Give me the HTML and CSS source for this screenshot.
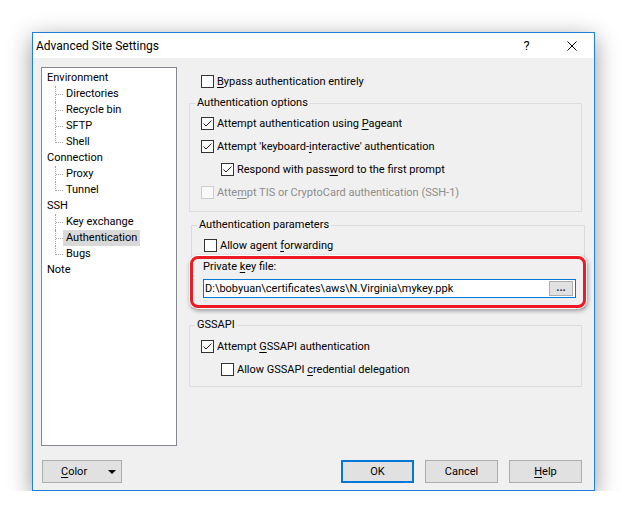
FILE: index.html
```html
<!DOCTYPE html>
<html lang="en">
<head>
    <meta charset="UTF-8">
    <meta name="viewport" content="width=device-width, initial-scale=1.0">
    <title>Advanced Site Settings</title>
    <link rel="stylesheet" href="styles.css">
</head>
<body>
    <div class="window">
        <div class="titlebar">
            <span class="title">Advanced Site Settings</span>
            <span class="tb-btn">?</span>
            <span class="tb-btn">
                <svg width="10" height="10" viewBox="0 0 10 10"><path d="M0.5 0.5 L9.5 9.5 M9.5 0.5 L0.5 9.5" stroke="#000" stroke-width="1" fill="none"/></svg>
            </span>
        </div>

        <div class="content">
            <div class="main">
                <ul class="tree">
                    <li><span class="node">Environment</span>
                        <ul>
                            <li><span class="node">Directories</span></li>
                            <li><span class="node">Recycle bin</span></li>
                            <li><span class="node">SFTP</span></li>
                            <li><span class="node">Shell</span></li>
                        </ul>
                    </li>
                    <li><span class="node">Connection</span>
                        <ul>
                            <li><span class="node">Proxy</span></li>
                            <li><span class="node">Tunnel</span></li>
                        </ul>
                    </li>
                    <li><span class="node">SSH</span>
                        <ul>
                            <li><span class="node">Key exchange</span></li>
                            <li><span class="node selected">Authentication</span></li>
                            <li><span class="node">Bugs</span></li>
                        </ul>
                    </li>
                    <li><span class="node">Note</span></li>
                </ul>

                <div class="pane">
                    <label class="check top-check">
                        <span class="box"></span>
                        <span><u>B</u>ypass authentication entirely</span>
                    </label>

                    <fieldset class="group">
                        <legend>Authentication options</legend>
                        <label class="check">
                            <span class="box"><svg class="tick" viewBox="0 0 11 11"><path d="M1.5 5.5 L4 8 L9.5 2.5" /></svg></span>
                            <span>Attempt authentication using <u>P</u>ageant</span>
                        </label>
                        <label class="check">
                            <span class="box"><svg class="tick" viewBox="0 0 11 11"><path d="M1.5 5.5 L4 8 L9.5 2.5" /></svg></span>
                            <span>Attempt 'keyboard-<u>i</u>nteractive' authentication</span>
                        </label>
                        <label class="check sub">
                            <span class="box"><svg class="tick" viewBox="0 0 11 11"><path d="M1.5 5.5 L4 8 L9.5 2.5" /></svg></span>
                            <span>Respond with pass<u>w</u>ord to the first prompt</span>
                        </label>
                        <label class="check disabled">
                            <span class="box"></span>
                            <span>Atte<u>m</u>pt TIS or CryptoCard authentication (SSH-1)</span>
                        </label>
                    </fieldset>

                    <fieldset class="group params">
                        <legend>Authentication parameters</legend>
                        <label class="check">
                            <span class="box"></span>
                            <span>Allow agent <u>f</u>orwarding</span>
                        </label>
                        <div class="keyfile">
                            <div class="key-label">Private <u>k</u>ey file:</div>
                            <div class="path-input">
                                <span class="path">D:\bobyuan\certificates\aws\N.Virginia\mykey.ppk</span>
                                <span class="browse">...</span>
                            </div>
                        </div>
                    </fieldset>

                    <fieldset class="group gss">
                        <legend>GSSAPI</legend>
                        <label class="check">
                            <span class="box"><svg class="tick" viewBox="0 0 11 11"><path d="M1.5 5.5 L4 8 L9.5 2.5" /></svg></span>
                            <span>Attempt <u>G</u>SSAPI authentication</span>
                        </label>
                        <label class="check sub">
                            <span class="box"></span>
                            <span>Allow GSSAPI <u>c</u>redential delegation</span>
                        </label>
                    </fieldset>
                </div>
            </div>

            <div class="buttons">
                <button class="btn color-btn"><span><u>C</u>olor</span><span class="arrow"></span></button>
                <span class="spacer"></span>
                <button class="btn default">OK</button>
                <button class="btn">Cancel</button>
                <button class="btn"><u>H</u>elp</button>
            </div>
        </div>
    </div>
</body>
</html>
```

FILE: styles.css
```css
* {
    box-sizing: border-box;
}

body {
    margin: 0;
    background: #fff;
    font-family: Roboto, "Noto Sans", sans-serif;
    font-size: 11px;
    color: #000;
}

u {
    text-decoration-thickness: 1px;
    text-underline-offset: 2px;
}

.window {
    width: 563px;
    height: 459px;
    margin: 32px 0 0 32px;
    border: 1px solid #1c80dc;
    background: #f0f0f0;
    display: flex;
    flex-direction: column;
    box-shadow: 0 6px 22px rgba(0, 0, 0, 0.42);
}

.titlebar {
    height: 25px;
    background: #fff;
    display: flex;
    align-items: center;
}

.title {
    flex: 1;
    padding-left: 3px;
    font-size: 12px;
}

.tb-btn {
    width: 45px;
    height: 25px;
    display: flex;
    align-items: center;
    justify-content: center;
    font-size: 13px;
}

.content {
    flex: 1;
    padding: 9px 12px 7px 8px;
    display: flex;
    flex-direction: column;
    gap: 14px;
}

.main {
    display: flex;
    gap: 12px;
    height: 379px;
}

/* tree */
.tree {
    width: 136px;
    margin: 0;
    padding: 2px 0 0 3px;
    list-style: none;
    background: #fff;
    border: 1px solid #828790;
}

.tree ul {
    margin: 0;
    padding-left: 18px;
    list-style: none;
}

.tree li {
    line-height: 16px;
}

.tree ul li {
    position: relative;
}

.tree ul li::before {
    content: '';
    position: absolute;
    left: -8px;
    top: 0;
    bottom: 0;
    border-left: 1px dotted #a0a0a0;
}

.tree ul li:last-child::before {
    bottom: auto;
    height: 9px;
}

.tree ul li::after {
    content: '';
    position: absolute;
    left: -7px;
    top: 8px;
    width: 7px;
    border-top: 1px dotted #a0a0a0;
}

.node {
    display: inline-block;
    padding: 0 2px;
    height: 16px;
}

.tree ul .node {
    padding: 0 3px;
}

.node.selected {
    background: #d9d9d9;
}

/* right pane */
.pane {
    flex: 1;
    display: flex;
    flex-direction: column;
}

.check {
    display: flex;
    align-items: center;
    gap: 3px;
    height: 23px;
    margin-left: 6px;
}

.check.sub {
    margin-left: 26px;
}

.top-check {
    margin: 3px 0 0 12px;
}

.box {
    width: 13px;
    height: 13px;
    border: 1px solid #333;
    background: #fff;
    display: flex;
    align-items: center;
    justify-content: center;
}

.tick {
    width: 11px;
    height: 11px;
    fill: none;
    stroke: #222;
    stroke-width: 1;
}

.check.disabled {
    color: #8d8d8d;
}

.check.disabled .box {
    border-color: #cccccc;
    background: #f9f9f9;
}

.group {
    margin: 2px 0 0;
    padding: 1px 5px 7px 5px;
    border: 1px solid #dcdcdc;
    min-width: 0;
}

.group legend {
    padding: 0 2px;
    line-height: 16px;
}

.params {
    margin: 5px -3px 0 2px;
    padding-bottom: 10px;
}

.params .check {
    margin-left: 7px;
}

.gss {
    margin-top: 8px;
    padding-top: 2px;
    padding-bottom: 5px;
}

.keyfile {
    position: relative;
    margin-top: 2px;
    padding-left: 6px;
}

/* red annotation ring */
.keyfile::after {
    content: '';
    position: absolute;
    top: -3px;
    left: -7px;
    right: -7px;
    bottom: -10px;
    border: 3px solid #ec1b24;
    border-radius: 8px;
    box-shadow: 0 0 0 1px #fff, 1px 2px 4px 1px rgba(0, 0, 0, 0.35);
    pointer-events: none;
}

.key-label {
    line-height: 16px;
}

.path-input {
    margin-top: 4px;
    width: 373px;
    height: 19px;
    border: 1px solid #0078d7;
    background: #fff;
    display: flex;
    align-items: center;
    padding-left: 1px;
}

.path {
    flex: 1;
}

.browse {
    width: 24px;
    height: 15px;
    margin-right: 2px;
    border: 1px solid #adadad;
    background: #e1e1e1;
    color: #2b1f6b;
    font-weight: bold;
    font-size: 11px;
    line-height: 12px;
    text-align: center;
}

/* bottom buttons */
.buttons {
    display: flex;
    gap: 11px;
    height: 23px;
}

.spacer {
    flex: 1;
}

.btn {
    width: 73px;
    height: 23px;
    border: 1px solid #adadad;
    background: #e1e1e1;
    font: inherit;
    color: #000;
    padding: 0;
    display: flex;
    align-items: center;
    justify-content: center;
}

.btn.default {
    border: 2px solid #0078d7;
}

.color-btn {
    width: 80px;
    margin-left: 1px;
    justify-content: flex-start;
    padding: 0 5px 0 18px;
}

.arrow {
    margin-left: auto;
    width: 0;
    height: 0;
    border-left: 4px solid transparent;
    border-right: 4px solid transparent;
    border-top: 4px solid #000;
}
```
